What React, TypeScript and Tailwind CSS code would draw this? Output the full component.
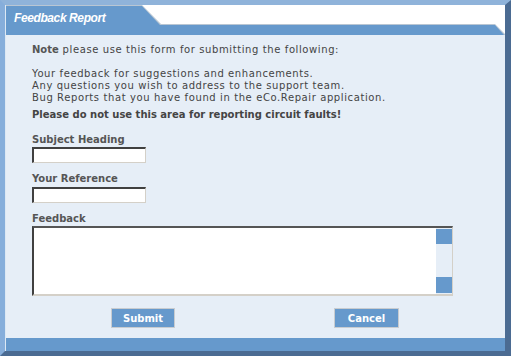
import { useState } from 'react';

const Label = ({ text }: { text: string }) => (
  <label className="block h-[12px] text-[10px] leading-[12px] font-bold text-[#555]">{text}</label>
);

const TextInput = ({ value, onChange, className }: { value: string; onChange: (v: string) => void; className: string }) => (
  <input
    type="text"
    value={value}
    onChange={(e) => onChange(e.target.value)}
    className={`block h-[16px] w-[114px] border-t-2 border-l-2 border-r border-b border-t-[#404040] border-l-[#404040] border-r-[#d4d0c8] border-b-[#d4d0c8] bg-white px-1 text-[10px] outline-none ${className}`}
  />
);

export default function App() {
  const [subject, setSubject] = useState('');
  const [reference, setReference] = useState('');
  const [feedback, setFeedback] = useState('');

  return (
    <div className="h-[356px] w-[511px] bg-white font-['DejaVu_Sans',Verdana,sans-serif] text-[#444]">
      <div className="flex h-full flex-col border-t-[5px] border-l-[5px] border-r-[6px] border-b-[5px] border-t-[#8fb3da] border-l-[#86aedb] border-r-[#4b6b92] border-b-[#4b6b92]">
        <div className="flex flex-1 flex-col border-l border-l-[#dce8f4]">
          {/* header tab */}
          <div className="relative h-[30px] bg-white">
            <div className="absolute inset-0 bg-[#b9c6d3] [clip-path:polygon(0_0,136px_0,155px_19px,489px_19px,499px_29px,499px_30px,0_30px)]" />
            <div className="absolute inset-0 bg-[#6699cc] [clip-path:polygon(0_1px,136px_1px,154px_20px,489px_20px,498px_30px,0_30px)]" />
            <h1 className="relative pl-[8px] pt-[6px] font-['Liberation_Sans',Arial,sans-serif] text-[12px] leading-[15px] font-bold italic tracking-[-0.4px] text-white">
              Feedback Report
            </h1>
          </div>

          {/* body */}
          <div className="flex-1 bg-[#e6eef7] pl-[26px] pt-[9px]">
            <p className="text-[10px] leading-[12px] tracking-[0.6px]">
              <span className="font-bold tracking-normal text-[#555]">Note</span> please use this form for submitting the following:
            </p>
            <div className="mt-[12px] text-[10px] leading-[12px] tracking-[0.6px]">
              <p>Your feedback for suggestions and enhancements.</p>
              <p>Any questions you wish to address to the support team.</p>
              <p>Bug Reports that you have found in the eCo.Repair application.</p>
            </div>
            <p className="mt-[5px] text-[10px] leading-[12px] font-bold text-[#444]">
              Please do not use this area for reporting circuit faults!
            </p>

            <div className="mt-[13px]">
              <Label text="Subject Heading" />
              <TextInput value={subject} onChange={setSubject} className="mt-[1px]" />
            </div>
            <div className="mt-[10px]">
              <Label text="Your Reference" />
              <TextInput value={reference} onChange={setReference} className="mt-[2px]" />
            </div>
            <div className="mt-[10px]">
              <Label text="Feedback" />
              <div className="mt-[1px] flex h-[70px] w-[421px] border-t-2 border-l-2 border-r border-b-2 border-t-[#555] border-l-[#404040] border-r-[#d4d0c8] border-b-[#d4d0c8] bg-white">
                <textarea
                  value={feedback}
                  onChange={(e) => setFeedback(e.target.value)}
                  className="flex-1 resize-none overflow-hidden bg-white p-1 text-[10px] outline-none"
                />
                <div className="flex w-[16px] flex-col justify-between bg-[#e6eef7] py-[1px]">
                  <div className="h-[15px] bg-[#6699cc]" />
                  <div className="h-[16px] bg-[#6699cc]" />
                </div>
              </div>
            </div>

            <div className="mt-[12px] flex gap-[159px] pl-[79px]">
              <button className="h-[20px] w-[64px] border border-[#c8ccd0] bg-[#6699cc] text-[10px] font-bold text-white">
                Submit
              </button>
              <button className="h-[20px] w-[65px] border border-[#c8ccd0] bg-[#6699cc] text-[10px] font-bold text-white">
                Cancel
              </button>
            </div>
          </div>

          {/* footer band */}
          <div className="h-[13px] bg-[#6699cc]" />
        </div>
      </div>
    </div>
  );
}
